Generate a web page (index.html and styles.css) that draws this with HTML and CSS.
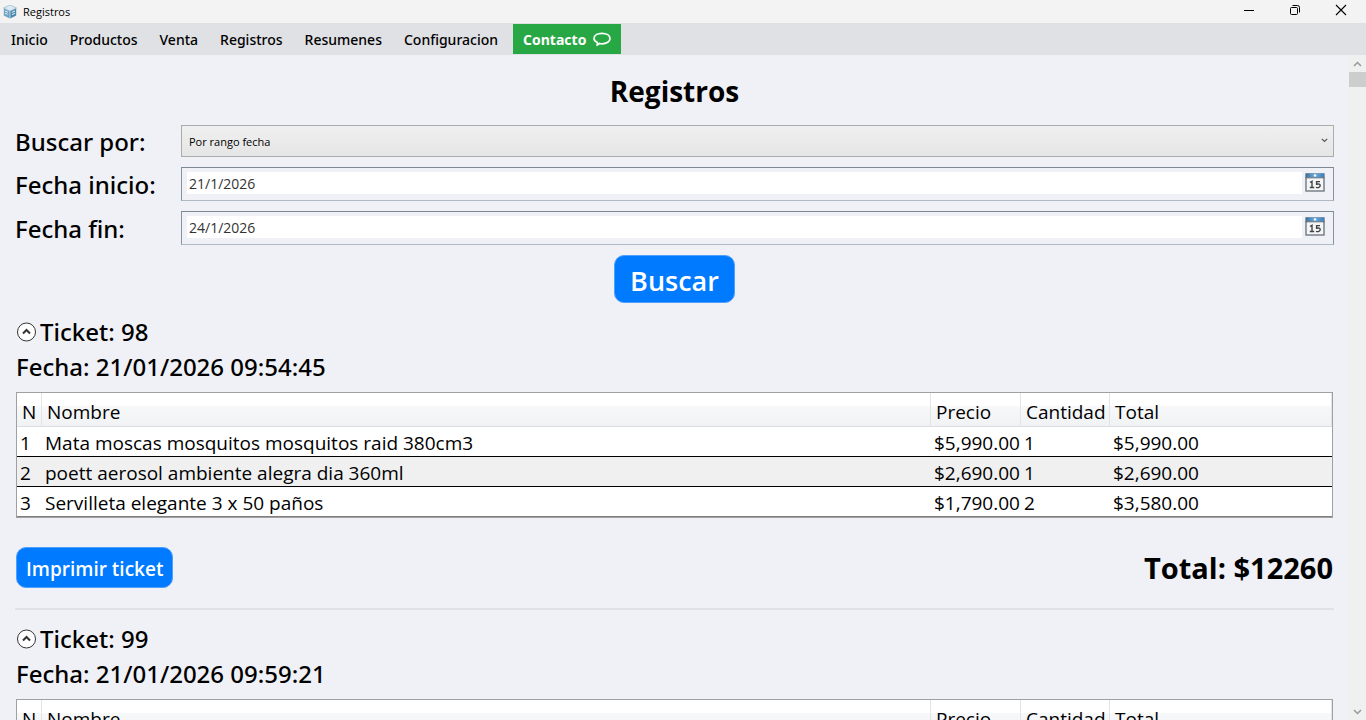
FILE: index.html
```html
<!DOCTYPE html>
<html lang="es">
<head>
  <meta charset="UTF-8">
  <meta name="viewport" content="width=device-width, initial-scale=1.0">
  <title>Registros</title>
  <link rel="stylesheet" href="styles.css">
</head>
<body>
  <header class="titlebar">
    <svg class="app-icon" width="14" height="14" viewBox="0 0 14 14">
      <path d="M7 0 L13.5 3 L7 6 L0.5 3 Z" fill="#dfeaf1" stroke="#8db4cd" stroke-width="0.7"/>
      <path d="M0.8 3.6 L6.7 6.2 V13.6 L0.8 10.6 Z" fill="#6fa3c4"/>
      <path d="M13.2 3.6 L7.3 6.2 V13.6 L13.2 10.6 Z" fill="#4f88ad"/>
      <path d="M2 6 L5 7.3 M2 8.2 L4.6 9.4 M8.8 7.4 L12 6 M9 9.6 L12 8.2" stroke="#e6f1f7" stroke-width="1"/>
    </svg>
    <span class="app-name">Registros</span>
    <div class="window-buttons">
      <button type="button" aria-label="Minimizar">
        <svg width="12" height="12" viewBox="0 0 12 12"><path d="M1 6.5 H11" stroke="#000"/></svg>
      </button>
      <button type="button" aria-label="Restaurar">
        <svg width="12" height="12" viewBox="0 0 12 12" fill="none" stroke="#000"><rect x="1.5" y="3.5" width="7" height="7" rx="1"/><path d="M3.5 1.5 H8.5 A2 2 0 0 1 10.5 3.5 V8.5"/></svg>
      </button>
      <button type="button" aria-label="Cerrar">
        <svg width="12" height="12" viewBox="0 0 12 12"><path d="M1 1 L11 11 M11 1 L1 11" stroke="#000" stroke-width="1.1"/></svg>
      </button>
    </div>
  </header>

  <nav class="menu">
    <a href="#">Inicio</a>
    <a href="#">Productos</a>
    <a href="#">Venta</a>
    <a href="#">Registros</a>
    <a href="#">Resumenes</a>
    <a href="#">Configuracion</a>
    <a href="#" class="contact">Contacto
      <svg width="18" height="14" viewBox="0 0 18 14" fill="none" stroke="#fff" stroke-width="1.7"><path d="M9 1.4 C13.6 1.4 17 3.5 17 6.6 C17 9.6 13.6 11.8 9 11.8 C8 11.8 7.3 11.7 6.6 11.5 L4.2 13 L4.4 10.6 C2.2 9.6 1 8.2 1 6.6 C1 3.5 4.4 1.4 9 1.4 Z"/></svg>
    </a>
  </nav>

  <div class="viewport">
    <main>
      <h1>Registros</h1>

      <form class="search">
        <label for="search-by">Buscar por:</label>
        <div class="select-box">
          <select id="search-by">
            <option>Por rango fecha</option>
          </select>
          <svg class="chevron" width="7" height="5" viewBox="0 0 7 5"><path d="M0.8 0.8 L3.5 3.5 L6.2 0.8" fill="none" stroke="#555" stroke-width="1.2"/></svg>
        </div>

        <label for="date-start">Fecha inicio:</label>
        <div class="date-box">
          <input type="text" id="date-start" value="21/1/2026">
          <button type="button" class="calendar" aria-label="Elegir fecha inicio">
            <svg width="20" height="19" viewBox="0 0 20 19"><use href="#calendar-icon"/></svg>
          </button>
        </div>

        <label for="date-end">Fecha fin:</label>
        <div class="date-box">
          <input type="text" id="date-end" value="24/1/2026">
          <button type="button" class="calendar" aria-label="Elegir fecha fin">
            <svg width="20" height="19" viewBox="0 0 20 19"><use href="#calendar-icon"/></svg>
          </button>
        </div>

        <button type="button" class="btn btn-search">Buscar</button>
      </form>

      <article class="ticket">
        <h2>
          <button type="button" class="toggle" aria-label="Contraer">
            <svg width="21" height="20" viewBox="0 0 21 20"><circle cx="10.5" cy="10" r="9" fill="#fff" stroke="#333"/><path d="M7 11.5 L10.5 8 L14 11.5" fill="none" stroke="#333" stroke-width="2"/></svg>
          </button>
          Ticket: 98
        </h2>
        <p class="date">Fecha: 21/01/2026 09:54:45</p>
        <table>
          <thead>
            <tr><th class="col-n">N</th><th>Nombre</th><th class="col-price">Precio</th><th class="col-qty">Cantidad</th><th class="col-total">Total</th></tr>
          </thead>
          <tbody>
            <tr><td>1</td><td>Mata moscas mosquitos mosquitos raid 380cm3</td><td>$5,990.00</td><td>1</td><td>$5,990.00</td></tr>
            <tr><td>2</td><td>poett aerosol ambiente alegra dia 360ml</td><td>$2,690.00</td><td>1</td><td>$2,690.00</td></tr>
            <tr><td>3</td><td>Servilleta elegante 3 x 50 paños</td><td>$1,790.00</td><td>2</td><td>$3,580.00</td></tr>
          </tbody>
        </table>
        <div class="ticket-footer">
          <button type="button" class="btn btn-print">Imprimir ticket</button>
          <strong class="total">Total: $12260</strong>
        </div>
      </article>

      <hr>

      <article class="ticket">
        <h2>
          <button type="button" class="toggle" aria-label="Contraer">
            <svg width="21" height="20" viewBox="0 0 21 20"><circle cx="10.5" cy="10" r="9" fill="#fff" stroke="#333"/><path d="M7 11.5 L10.5 8 L14 11.5" fill="none" stroke="#333" stroke-width="2"/></svg>
          </button>
          Ticket: 99
        </h2>
        <p class="date">Fecha: 21/01/2026 09:59:21</p>
        <table>
          <thead>
            <tr><th class="col-n">N</th><th>Nombre</th><th class="col-price">Precio</th><th class="col-qty">Cantidad</th><th class="col-total">Total</th></tr>
          </thead>
        </table>
      </article>
    </main>

    <div class="scrollbar">
      <svg width="9" height="6" viewBox="0 0 9 6"><path d="M1 5 L4.5 1.5 L8 5" fill="none" stroke="#999" stroke-width="1.5"/></svg>
      <div class="thumb"></div>
      <svg width="9" height="6" viewBox="0 0 9 6"><path d="M1 1 L4.5 4.5 L8 1" fill="none" stroke="#999" stroke-width="1.5"/></svg>
    </div>
  </div>

  <!-- shared calendar icon -->
  <svg class="defs" width="0" height="0">
    <defs>
      <linearGradient id="cal-blue" x1="0" y1="0" x2="1" y2="0">
        <stop offset="0" stop-color="#3f6fa0"/>
        <stop offset="0.5" stop-color="#6aaee0"/>
        <stop offset="1" stop-color="#3c7cba"/>
      </linearGradient>
      <symbol id="calendar-icon" viewBox="0 0 20 19">
        <rect x="1" y="1" width="18" height="17" fill="#f4f5f6" stroke="#707a82" stroke-width="1.4"/>
        <rect x="1" y="0.5" width="18" height="4" fill="url(#cal-blue)"/>
        <path d="M0.5 4.8 H19.5" stroke="#5b6873"/>
        <circle cx="10" cy="2.4" r="1.2" fill="#fff"/>
        <path d="M5 9.5 L7 8.3 V14.5 M4.8 14.5 H9.2" fill="none" stroke="#444" stroke-width="1.4"/>
        <path d="M15 8.6 H11.6 V11.2 C13.8 10.7 15.2 11.2 15.2 12.6 C15.2 14.5 13 15 11 14.3" fill="none" stroke="#444" stroke-width="1.4"/>
      </symbol>
    </defs>
  </svg>
</body>
</html>
```

FILE: styles.css
```css
* {
  box-sizing: border-box;
}
body {
  margin: 0;
  height: 100vh;
  display: flex;
  flex-direction: column;
  overflow: hidden;
  background: #f0f1f6;
  color: #000;
  font-family: 'Segoe UI', 'Open Sans', 'Noto Sans', sans-serif;
}
button, input, select {
  font-family: inherit;
  color: inherit;
}
svg {
  display: block;
}
.defs {
  position: absolute;
}

/* Window bar */
.titlebar {
  display: flex;
  align-items: center;
  flex: none;
  height: 23px;
  padding-left: 3px;
  gap: 6px;
  background: #f3f3f3;
}
.app-name {
  font-size: 11px;
}
.window-buttons {
  display: flex;
  margin-left: auto;
  padding-right: 2px;
  align-self: flex-start;
}
.window-buttons button {
  display: flex;
  align-items: center;
  justify-content: center;
  width: 46px;
  height: 20px;
  padding: 0;
  border: 0;
  background: none;
}

/* Menu */
.menu {
  display: flex;
  align-items: center;
  flex: none;
  height: 32px;
  background: #e0e1e5;
}
.menu a {
  display: flex;
  align-items: center;
  gap: 7px;
  height: 30px;
  padding: 0 11px;
  color: #000;
  font-family: 'Segoe UI', 'Noto Sans', sans-serif;
  font-size: 14px;
  font-weight: 500;
  text-decoration: none;
}
.menu .contact {
  margin-left: 4px;
  padding: 0 10px;
  background: #28a745;
  color: #fff;
  font-family: inherit;
  font-weight: 700;
}

.viewport {
  display: flex;
  flex: 1;
  min-height: 0;
}
main {
  flex: 1;
  min-width: 0;
  padding: 16px 15px 0;
  overflow: hidden;
}
.scrollbar {
  display: flex;
  flex-direction: column;
  align-items: center;
  width: 17px;
  padding: 6px 0 5px;
  background: #f0f0f0;
}
.thumb {
  width: 17px;
  height: 15px;
  margin: 5px 0 auto;
  background: #cdcdcd;
}

h1 {
  margin: 0 0 14px;
  font-size: 28px;
  line-height: 40px;
  font-weight: 700;
  text-align: center;
}

/* Search form */
.search {
  display: grid;
  grid-template-columns: 156px 1fr;
  gap: 10px;
  align-items: center;
}
.search label {
  padding-top: 2px;
  font-family: 'Segoe UI', 'Noto Sans', sans-serif;
  font-size: 24px;
  line-height: 30px;
  font-weight: 500;
  white-space: nowrap;
}
.select-box {
  position: relative;
}
.select-box select {
  display: block;
  width: 100%;
  height: 32px;
  padding: 0 7px;
  appearance: none;
  border: 1px solid #acacac;
  border-radius: 0;
  background: linear-gradient(#f0f0f0, #e5e5e5);
  font-size: 11px;
}
.chevron {
  position: absolute;
  right: 6px;
  top: 13px;
}
.date-box {
  display: flex;
  align-items: center;
  height: 34px;
  padding: 0 8px 2px 5px;
  gap: 3px;
  border: 1px solid;
  border-color: #7c8894 #8593a0 #b0bac5 #8593a0;
}
.date-box input {
  flex: 1;
  min-width: 0;
  height: 22px;
  padding: 0 2px;
  border: 0;
  background: #fff;
  color: #333;
  font-size: 14px;
}
.calendar {
  padding: 0 0 2px;
  border: 0;
  background: none;
}
.btn {
  border: 1px solid #4f9fff;
  border-radius: 10px;
  background: #007aff;
  color: #fff;
  font-weight: 600;
}
.btn-search {
  grid-column: 1 / -1;
  justify-self: center;
  height: 48px;
  padding: 2px 15px 0;
  font-size: 27px;
}

/* Tickets */
.ticket {
  margin-top: 11px;
  padding: 0 1px;
}
.ticket h2 {
  display: flex;
  align-items: center;
  gap: 3px;
  margin: 0;
  font-family: 'Segoe UI', 'Noto Sans', sans-serif;
  font-size: 24px;
  line-height: 36px;
  font-weight: 500;
}
.toggle {
  padding: 0;
  border: 0;
  background: none;
}
.date {
  margin: 0 0 8px;
  font-family: 'Segoe UI', 'Noto Sans', sans-serif;
  font-size: 24px;
  line-height: 34px;
  font-weight: 500;
}
table {
  width: 100%;
  table-layout: fixed;
  border: 1px solid #a0a0a0;
  border-spacing: 0;
  background: #fff;
  font-size: 19px;
}
th, td {
  text-align: left;
  font-weight: 400;
  white-space: nowrap;
}
th {
  height: 34px;
  padding: 4px 0 0 5px;
  border-right: 1px solid #e3e4e6;
  border-bottom: 1px solid #dcdde0;
  background: linear-gradient(#fff 40%, #f7f8fa 40%, #f1f2f4);
}
td {
  height: 30px;
  padding: 2px 0 0 3px;
  border-bottom: 1px solid #000;
}
tbody tr:nth-child(even) {
  background: #f0f0f0;
}
tbody tr:last-child td {
  border-bottom-color: #808080;
}
.col-n {
  width: 25px;
}
.col-price {
  width: 90px;
}
.col-qty {
  width: 89px;
}
.col-total {
  width: 222px;
}
.ticket-footer {
  display: flex;
  align-items: center;
  justify-content: space-between;
  margin-top: 29px;
}
.btn-print {
  height: 41px;
  padding: 2px 9px 0;
  font-size: 19px;
}
.total {
  font-size: 29px;
  line-height: 40px;
}
hr {
  height: 2px;
  margin: 20px 0 0;
  border: 0;
  background: #e0e1e5;
}
```
